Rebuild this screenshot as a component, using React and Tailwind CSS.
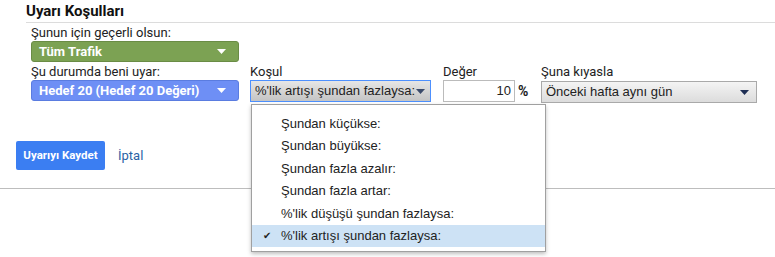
import React from "react";

const sans = "font-['Roboto','Liberation_Sans',sans-serif]";
const arial = "font-['Liberation_Sans','Roboto',sans-serif]";

function Caret({ className }) {
  return (
    <svg width="9" height="5" viewBox="0 0 9 5" className={className}>
      <path d="M0 0h9L4.5 5z" fill="currentColor" />
    </svg>
  );
}

const options = [
  "Şundan küçükse:",
  "Şundan büyükse:",
  "Şundan fazla azalır:",
  "Şundan fazla artar:",
  "%'lik düşüşü şundan fazlaysa:",
  "%'lik artışı şundan fazlaysa:",
];

export default function App() {
  return (
    <div className={`relative w-[775px] h-[257px] overflow-hidden bg-white text-[#222] ${sans}`}>
      <div className="ml-[26px] h-[23px] border-b border-[#dcdcdc] pt-[2px] text-[15px] font-bold leading-[18px] text-[#111]">
        Uyarı Koşulları
      </div>
      <div className="pl-[31px]">
        <div className="mt-[1px] text-[13px] leading-[17px]">Şunun için geçerli olsun:</div>
        <div className="flex h-[21px] w-[208px] items-center justify-between rounded-[3px] border border-[#6a8c45] bg-[#7ca253] pl-[7px] pr-[12px] text-[13px] font-bold text-white">
          <span>Tüm Trafik</span>
          <Caret className="text-white" />
        </div>
        <div className="mt-[1px] flex">
          <div className="w-[219px]">
            <div className="text-[13px] leading-[17px]">Şu durumda beni uyar:</div>
            <div className="flex h-[21px] w-[208px] items-center justify-between rounded-[3px] border border-[#5a7ce0] bg-[#6e8ff5] pl-[7px] pr-[12px] text-[13px] font-bold text-white">
              <span>Hedef 20 (Hedef 20 Değeri)</span>
              <Caret className="text-white" />
            </div>
          </div>
          <div className="w-[193px]">
            <div className="text-[13px] leading-[17px]">Koşul</div>
            <div className={`flex h-[22px] w-[181px] items-center justify-between border border-[#4d90fe] bg-gradient-to-b from-[#e6e6e6] to-[#c4c4c4] pl-[4px] pr-[5px] text-[13px] text-[#222] ${arial}`}>
              <span>%'lik artışı şundan fazlaysa:</span>
              <Caret className="text-[#3a4a6a]" />
            </div>
          </div>
          <div className="w-[98px]">
            <div className="text-[13px] leading-[17px]">Değer</div>
            <div className="flex items-center">
              <div className={`flex h-[22px] w-[72px] items-center justify-end border border-[#bbb] bg-white pr-[3px] text-[13px] ${arial}`}>10</div>
              <span className="ml-[3px] text-[14px] font-bold">%</span>
            </div>
          </div>
          <div>
            <div className="text-[13px] leading-[17px]">Şuna kıyasla</div>
            <div className={`mt-[1px] flex h-[22px] w-[216px] items-center justify-between border border-[#a9a9a9] bg-gradient-to-b from-[#f4f4f4] to-[#dcdcdc] pl-[4px] pr-[7px] text-[13px] text-[#222] ${arial}`}>
              <span>Önceki hafta aynı gün</span>
              <Caret className="text-[#1f2f55]" />
            </div>
          </div>
        </div>
      </div>
      <div className="mt-[38px] flex h-[29px] items-center pl-[16px]">
        <button className="h-[29px] w-[89px] rounded-[2px] bg-[#3b7ef2] text-[11.5px] font-bold text-white">Uyarıyı Kaydet</button>
        <a className="ml-[13px] text-[13px] text-[#2b63a5]">İptal</a>
      </div>
      <div className="mt-[18px] border-b border-[#bdbdbd]" />

      <div className={`absolute left-[251px] top-[104px] w-[295px] border border-[#a0a0a0] bg-white pt-[7px] pb-[4px] shadow-[0_2px_4px_rgba(0,0,0,0.25)] text-[13px] text-[#222] ${arial}`}>
        {options.map((o, i) => {
          const sel = i === options.length - 1;
          return (
            <div key={o} className={`relative flex h-[22.5px] items-center pl-[29px] ${sel ? "bg-[#cde2f5]" : ""}`}>
              {sel && <span className="absolute left-[11px] text-[10px]">✔</span>}
              {o}
            </div>
          );
        })}
      </div>
    </div>
  );
}
